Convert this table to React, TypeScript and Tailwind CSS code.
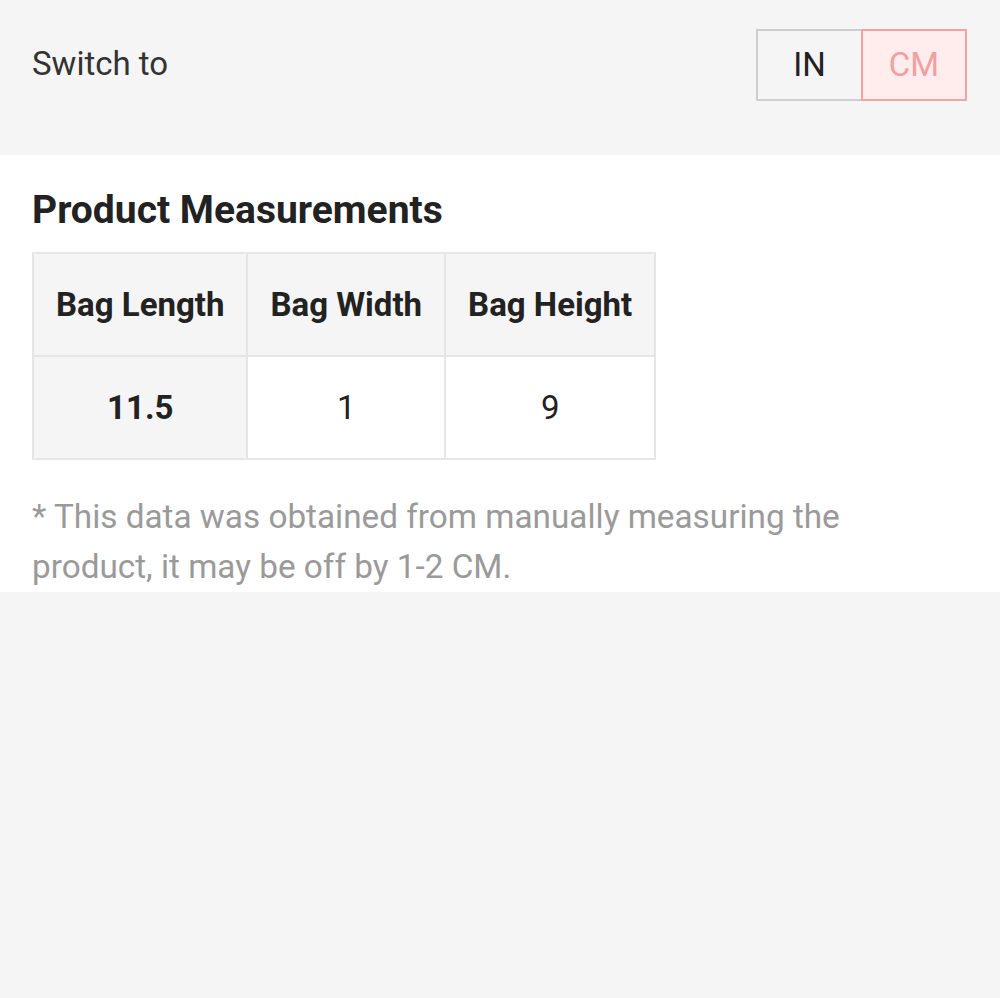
const cols = ['Bag Length', 'Bag Width', 'Bag Height'];
const vals = ['11.5', '1', '9'];

export default function App() {
  return (
    <div className="min-h-[998px] w-full bg-[#f5f5f5] font-['Roboto',sans-serif] text-[#222]">
      {/* unit switch */}
      <div className="flex h-[155px] items-start justify-between pl-8 pr-[33px] pt-[29px]">
        <span className="mt-[13px] text-[33px] leading-[44px] text-[#333]">Switch to</span>
        <div className="flex">
          <button className="flex h-[72px] w-[107px] items-center justify-center border-2 border-[#cfcfcf] text-[33px] text-[#222]">
            IN
          </button>
          <button className="-ml-[2px] flex h-[72px] w-[106px] items-center justify-center border-2 border-[#f2a3a3] bg-[#ffeded] text-[33px] text-[#f0a0a0]">
            CM
          </button>
        </div>
      </div>

      {/* measurements */}
      <div className="bg-white px-8 pt-[33px]">
        <h2 className="text-[39px] font-bold leading-[44px] text-[#222]">Product Measurements</h2>
        <table className="mt-[20px] border-collapse border-2 border-[#e6e6e6]">
          <thead>
            <tr>
              {cols.map((c) => (
                <th key={c} className="h-[103px] border-2 border-[#e6e6e6] bg-[#f5f5f5] px-[22px] text-[33px] font-bold text-[#222]">
                  {c}
                </th>
              ))}
            </tr>
          </thead>
          <tbody>
            <tr>
              {vals.map((v, i) => (
                <td
                  key={i}
                  className={`h-[103px] border-2 border-[#e6e6e6] px-[22px] text-center text-[33px] ${i === 0 ? 'bg-[#f5f5f5] font-bold' : 'bg-white'}`}
                >
                  {v}
                </td>
              ))}
            </tr>
          </tbody>
        </table>
        <p className="mt-[32px] max-w-[880px] text-[33.3px] leading-[50px] text-[#9a9a9a]">
          * This data was obtained from manually measuring the product, it may be off by 1-2 CM.
        </p>
      </div>
    </div>
  );
}
